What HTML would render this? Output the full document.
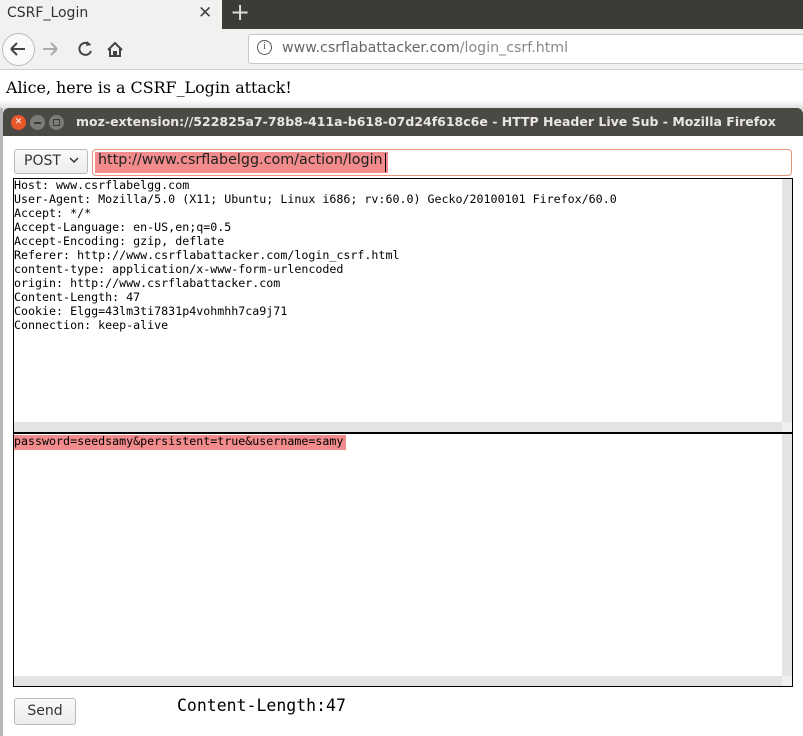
<!DOCTYPE html>
<html><head><meta charset="utf-8"><style>
*{margin:0;padding:0;box-sizing:border-box}
body{width:803px;height:736px;overflow:hidden;background:#fff;position:relative;font-family:"DejaVu Sans","Liberation Sans",sans-serif}
.abs{position:absolute}
.mono{font-family:"DejaVu Sans Mono","Liberation Mono",monospace}
</style></head><body>
<div class="abs" style="left:0;top:0;width:803px;height:29px;background:#3c3b37"></div>
<div class="abs" style="left:0;top:0;width:222px;height:29px;background:#f2f1f0"></div>
<div class="abs" style="left:7px;top:5px;font-size:14px;color:#333">CSRF_Login</div>
<div class="abs" style="left:198px;top:3px;font-size:17px;color:#444">✕</div>
<div class="abs" style="left:230px;top:-2px;font-size:24px;color:#ddd">+</div>
<div class="abs" style="left:0;top:29px;width:803px;height:41px;background:#f2f1f0;border-bottom:1px solid #cfcfcf"></div>
<div class="abs" style="left:2px;top:33px;width:33px;height:33px;border-radius:50%;border:1px solid #bbb;background:#fafafa"></div>
<svg class="abs" style="left:0;top:29px" width="140" height="41">
<path d="M11 20h14M11 20l6-6M11 20l6 6" stroke="#444" stroke-width="2" fill="none"/>
<path d="M43 20h14M57 20l-6-6M57 20l-6 6" stroke="#aaa" stroke-width="2" fill="none"/>
<path d="M90 16a6 6 0 1 0 1 6" stroke="#444" stroke-width="2" fill="none"/><path d="M87 12l4 4-5 1z" fill="#444"/>
<path d="M108 21l7-7 7 7M110 19v8h10v-8M114 27v-4h2v4" stroke="#444" stroke-width="2" fill="none"/>
</svg>
<div class="abs" style="left:248px;top:34px;width:560px;height:30px;background:#fff;border:1px solid #c8c8c8;border-radius:3px"></div>
<div class="abs" style="left:257px;top:40px;width:15px;height:15px;border:1.5px solid #555;border-radius:50%;font-size:10px;text-align:center;line-height:12px;color:#555;font-family:'Liberation Serif',serif">i</div>
<div class="abs" style="left:282px;top:40px;font-size:14.2px;color:#666">www.csrflabattacker.com<span style="color:#888">/login_csrf.html</span></div>
<div class="abs" style="left:6px;top:78px;font-family:'DejaVu Serif','Liberation Serif',serif;font-size:15.9px;color:#000;white-space:nowrap">Alice, here is a CSRF_Login attack!</div>
<div class="abs" style="left:0;top:100px;width:803px;height:10px;background:linear-gradient(#fff,#d8d8d8)"></div>
<div class="abs" style="left:0;top:108px;width:3px;height:628px;background:#b8b8b8"></div>
<div class="abs" style="left:3px;top:108px;width:800px;height:28px;background:#4b4944;border-radius:6px 6px 0 0"></div>
<div class="abs" style="left:11px;top:115px;width:15px;height:15px;border-radius:50%;background:#e9572b;color:#fff;font-size:9px;text-align:center;line-height:15px">✕</div>
<div class="abs" style="left:30px;top:115px;width:15px;height:15px;border-radius:50%;background:#7d7b75;"><div style="margin:7px 4px 0;height:1.5px;background:#3c3b37"></div></div>
<div class="abs" style="left:49px;top:115px;width:15px;height:15px;border-radius:50%;background:#7d7b75;"><div style="margin:4px;height:7px;border:1px solid #3c3b37"></div></div>
<div class="abs" style="left:76px;top:114px;font-size:12.5px;font-weight:bold;color:#e8e6e2;white-space:nowrap">moz-extension://522825a7-78b8-411a-b618-07d24f618c6e - HTTP Header Live Sub - Mozilla Firefox</div>
<div class="abs" style="left:3px;top:136px;width:800px;height:600px;background:#fff"></div>
<div class="abs" style="left:14px;top:149px;width:74px;height:25px;border:1px solid #bbb;border-radius:3px;background:linear-gradient(#fafafa,#ececec)"></div>
<div class="abs" style="left:24px;top:153px;font-size:14px;color:#333">POST</div>
<svg class="abs" style="left:69px;top:157px" width="10" height="7"><path d="M1 1l4 4 4-4" stroke="#333" stroke-width="1.5" fill="none"/></svg>
<div class="abs" style="left:92px;top:149px;width:700px;height:27px;border:1px solid #e8937b;border-radius:4px;background:#fff"></div>
<div class="abs" style="left:95px;top:152px;width:293px;height:21px;background:#f28b8b"></div>
<div class="abs" style="left:98px;top:152px;font-size:14.3px;color:#222;white-space:nowrap">http://www.csrflabelgg.com/action/login</div>
<div class="abs" style="left:385px;top:153px;width:1px;height:19px;background:#000"></div>
<div class="abs" style="left:13px;top:178px;width:780px;height:256px;border:1px solid #000;border-bottom:2px solid #000"></div>
<div class="abs" style="left:782px;top:179px;width:10px;height:243px;background:#e4e4e4"></div>
<div class="abs" style="left:14px;top:422px;width:768px;height:10px;background:#e4e4e4"></div>
<div class="abs" style="left:782px;top:422px;width:10px;height:10px;background:#efefef"></div>
<pre class="abs mono" style="left:14px;top:178px;font-size:11.65px;line-height:14px;color:#000">Host: www.csrflabelgg.com
User-Agent: Mozilla/5.0 (X11; Ubuntu; Linux i686; rv:60.0) Gecko/20100101 Firefox/60.0
Accept: */*
Accept-Language: en-US,en;q=0.5
Accept-Encoding: gzip, deflate
Referer: http://www.csrflabattacker.com/login_csrf.html
content-type: application/x-www-form-urlencoded
origin: http://www.csrflabattacker.com
Content-Length: 47
Cookie: Elgg=43lm3ti7831p4vohmhh7ca9j71
Connection: keep-alive</pre>
<div class="abs" style="left:13px;top:432px;width:780px;height:255px;border:1px solid #000;border-top:none"></div>
<div class="abs" style="left:782px;top:434px;width:10px;height:242px;background:#e4e4e4"></div>
<div class="abs" style="left:14px;top:676px;width:768px;height:10px;background:#e4e4e4"></div>
<div class="abs" style="left:782px;top:676px;width:10px;height:10px;background:#efefef"></div>
<div class="abs" style="left:14px;top:435px;width:332px;height:15px;background:#f28b8b"></div>
<pre class="abs mono" style="left:14px;top:434px;font-size:11.65px;line-height:14px;color:#000">password=seedsamy&amp;persistent=true&amp;username=samy</pre>
<div class="abs" style="left:14px;top:698px;width:62px;height:27px;border:1px solid #bbb;border-radius:3px;background:linear-gradient(#fafafa,#ececec);font-size:14px;color:#333;text-align:center;line-height:25px">Send</div>
<div class="abs mono" style="left:177px;top:696px;font-size:16.5px;color:#000">Content-Length:47</div>
</body></html>
